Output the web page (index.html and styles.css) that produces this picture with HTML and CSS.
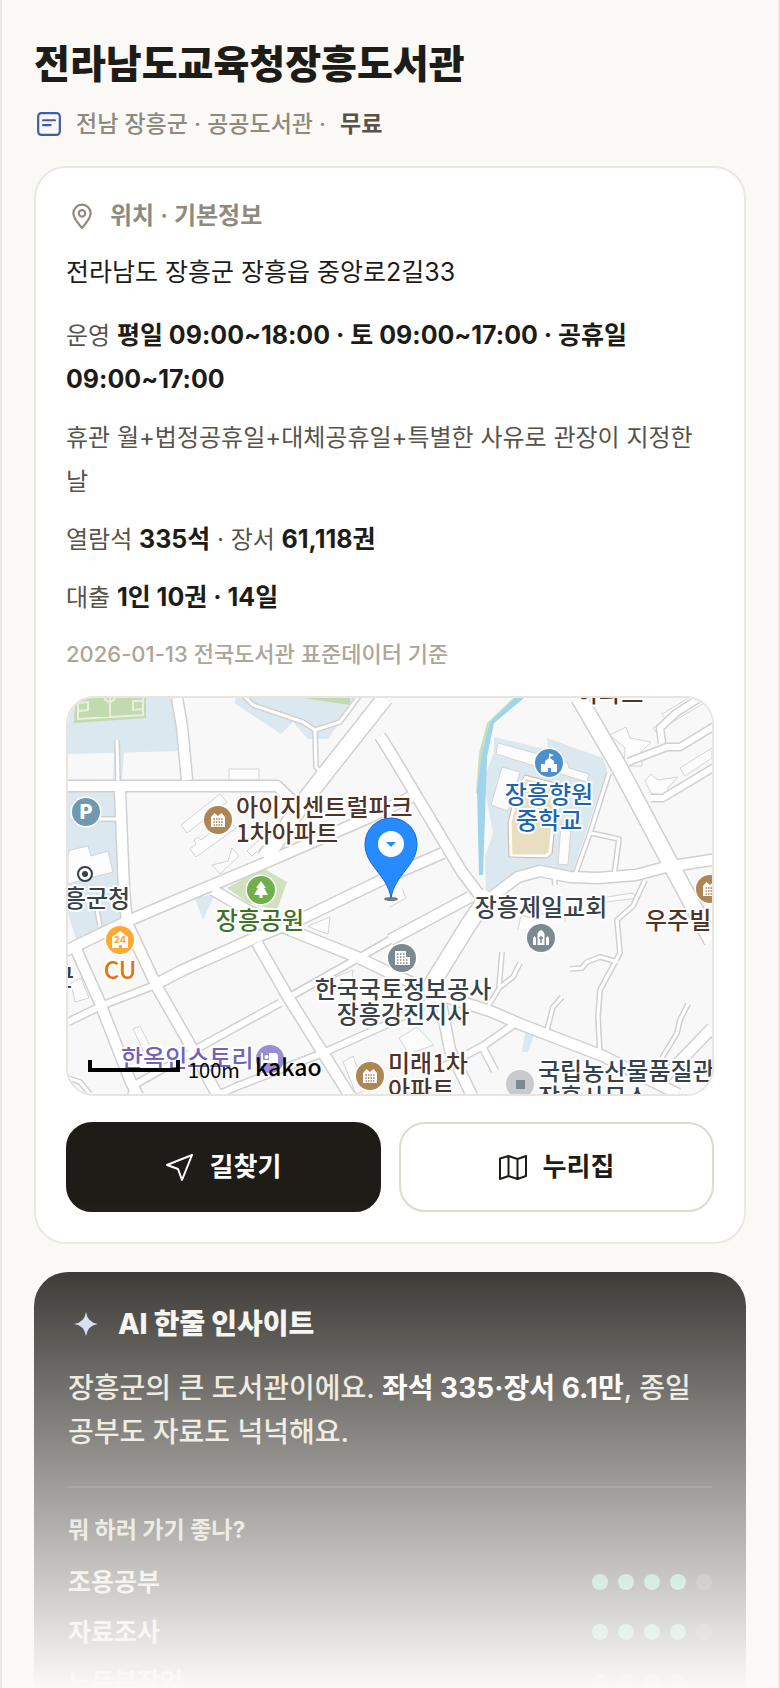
FILE: index.html
```html
<!DOCTYPE html>
<html lang="ko">
<head>
  <meta charset="UTF-8">
  <meta name="viewport" content="width=device-width, initial-scale=1.0">
  <title>전라남도교육청장흥도서관</title>
  <link rel="stylesheet" href="styles.css">
</head>
<body>
  <main class="page">
    <!-- Title -->
    <header class="page-header">
      <h1 class="title">전라남도교육청장흥도서관</h1>
      <p class="subtitle">
        <svg class="subtitle-icon" viewBox="0 0 24 24" aria-hidden="true">
          <rect x="2" y="2" width="20" height="20" rx="3"/>
          <path d="M6.500 8.500h11M6.500 13h7"/>
        </svg>
        <span>전남 장흥군 · 공공도서관 ·</span>
        <b>무료</b>
      </p>
    </header>

    <!-- Location card -->
    <section class="card">
      <h2 class="card-head">
        <svg class="pin-icon" viewBox="0 0 24 24" aria-hidden="true">
          <path d="M12 23C8 18.500 4 14 4 9.500a8 8 0 0 1 16 0C20 14 16 18.500 12 23z"/>
          <circle cx="12" cy="9.500" r="3"/>
        </svg>
        위치 · 기본정보
      </h2>
      <p class="address">전라남도 장흥군 장흥읍 중앙로2길33</p>
      <div class="info">
        <p>운영 <b>평일 09:00~18:00 · 토 09:00~17:00 · 공휴일 09:00~17:00</b></p>
        <p>휴관 월+법정공휴일+대체공휴일+특별한 사유로 관장이 지정한 날</p>
        <p>열람석 <b>335석</b> · 장서 <b>61,118권</b></p>
        <p>대출 <b>1인 10권 · 14일</b></p>
      </div>
      <p class="source">2026-01-13 전국도서관 표준데이터 기준</p>

      <div class="map">
        <svg viewBox="0 0 644 396" preserveAspectRatio="xMidYMid slice" role="img" aria-label="지도">
          <defs>
            <g id="road-l">
              <path d="M317 0 260 72 239 99 197 160"/>
              <path d="M511 0 550 67 602 165 644 243"/>
              <path d="M422 195 399 229 362 289"/>
            </g>
            <g id="road-m">
              <path d="M-5 88H209L230 108"/>
              <path d="M109 0 114 29 119 82"/>
              <path d="M52 93 56 192 59 225 89 289 125 352 151 400"/>
              <path d="M-5 254 62 222 104 204 192 167 300 120 345 98"/>
              <path d="M312 38 324 57 394 174 416 203"/>
              <path d="M92 284 115 272 189 239 235 220 322 178 375 155"/>
              <path d="M145 192 179 212 222 232 289 259 322 275 372 297 422 313 452 326 535 358 582 382 610 396"/>
              <path d="M189 245 220 299 255 355 282 398"/>
              <path d="M7 249 32 305 62 382 70 398"/>
              <path d="M322 242 402 199"/>
              <path d="M372 300 382 352 404 398"/>
              <path d="M418 203 450 179 472 173 502 179 530 180 568 177 598 169 650 161"/>
              <path d="M590 386 644 330"/>
            </g>
            <g id="road-s">
              <path d="M0 324 35 307 85 288"/>
              <path d="M225 297 287 262 322 242"/>
              <path d="M212 305 130 350M125 354 68 386 62 400"/>
              <path d="M152 396 170 388 255 355 322 325 368 300"/>
              <path d="M448 325 415 348 375 369M415 350 427 373"/>
              <path d="M560 64 599 49 612 49 648 27M594 45 592 30 608 15 638 -4"/>
              <path d="M583 100 595 100 648 68"/>
            </g>
            <g id="road-xs">
              <path d="M49 42 50 84M32 121H48"/>
              <path d="M26 196 32 228"/>
              <path d="M175 -3 185 7 235 24 247 32 272 24 292 -3M247 32 248 69 256 77"/>
              <path d="M532 357 530 319 532 292 552 255 549 222 565 208 577 182"/>
              <path d="M550 264 532 259 519 264 514 270 502 271"/>
              <path d="M419 310 432 289 445 279 452 265M431 289 434 254"/>
              <path d="M479 332 485 309 494 299"/>
              <path d="M594 360 609 335 612 322 620 306"/>
              <path d="M541 75 522 135 507 177M523 135 551 141 546 178"/>
              <path d="M486 176 487 187"/>
              <path d="M0 380 12 384 22 396"/>
            </g>
            <g id="apt">
              <circle r="14.500" class="halo"/>
              <circle r="14" fill="#ad8656"/>
              <path d="M-7 7V-3l3.500-4L0-4l3.500-3L7-3V7z" fill="#fff"/>
              <path d="M-4.500-1h9M-4.500 2h9M-4.500 5h9" stroke="#ad8656" stroke-width="1.500" stroke-dasharray="1.500 1"/>
            </g>
          </defs>

          <rect width="644" height="396" fill="#f8f8f8"/>

          <!-- Ground areas -->
          <g fill="#dbe8f0">
            <path d="M0 0H105L112 53 0 56z"/>
            <path d="M46 53H56L54 82H45z"/>
            <path d="M0 94H46L52 222 8 241 0 215z"/>
            <path d="M168 0H288L272 24 260 41H240L225 24 213 36 166 5z"/>
            <path d="M426 39 480 52 479 40 535 60 539 72 505 173 472 168 450 172 422 197H418L417 159 425 135 415 82 426 55z"/>
            <path d="M127 200 147 196 135 222z"/>
            <path d="M457 335 466 337 460 354H454z"/>
            <path d="M418 190H428L422 199z"/>
          </g>
          <path d="M445 0H455L424 26 417 59 412 100 408 95 411 55 419 25z" fill="#cbdfbd"/>
          <path d="M447 0H456L426 25 419 59 415 177H411L409 92 414 55 422 24z" fill="#9ed5ec"/>
          <g fill="#c2dab0">
            <path d="M7-2H78V20L6 25z"/>
            <path d="M235 0H282V7z"/>
            <path d="M159 190 195 170 219 184 209 212 180 205z" fill="#cfe1bf"/>
          </g>
          <path d="M10-2V21L75 17V-2M10 13 20 12V4L10 5M75 11 65 12V3H75M42-2V19M36 0Q42 8 47 0" class="pitch"/>
          <path d="M457 79 489 87 482 155 478 158 443 158 442 125 450 92z" fill="#e9dfc0" stroke="#fff" stroke-width="3"/>
          <path d="M457 77 491 86 484 156 479 160 441 159 440 125 448 92z" class="pitch-edge"/>

          <!-- Buildings -->
          <g class="building">
            <path d="M161 71H191V82H161z"/>
            <path d="M113 127 152 96 159 104 119 135z"/>
            <path d="M122 151 128 146 126 142 130 139 133 142 160 121 168 130 128 159z"/>
            <path d="M144 167 160 163 164 150 171 158 152 176z"/>
            <path d="M0 156 2 152 20 148 23 158 40 153 45 174 0 186z"/>
            <path d="M179 153 200 134 205 139 184 158z"/>
            <path d="M430 45 499 64 501 70 521 76 519 84 428 56z"/>
            <path d="M434 69 452 74 440 113 423 107z"/>
            <path d="M493 126 503 128 500 167 490 166z"/>
            <path d="M542 37 558 29 562 40 583 44 573 54 574 68 556 68 557 50z"/>
            <path d="M577 83 583 76 590 82 610 79 600 90 599 101 583 95z"/>
            <path d="M585 30 598 22 594 16 644-14 644 0 588 34z"/>
            <path d="M612 70 644 50V60L617 78z"/>
            <path d="M533 200 564 195 570 200 538 204z"/>
            <path d="M450 232 453 217 470 222V216H497V224"/>
            <path d="M240 228 262 219 260 236 248 232z"/>
            <path d="M3 285 13 280 21 300 7 304z"/>
            <path d="M65 331 72 328 84 352 77 356z"/>
            <path d="M331 340 349 329 366 347 341 356z"/>
            <path d="M275 364 285 358 298 392 288 396z"/>
            <path d="M250 286 285 272 284 280 254 296z"/>
            <path d="M322 209 338 200 334 190"/>
          </g>

          <!-- Roads: grey casing first, white fill over it -->
          <g class="road road-casing">
            <use href="#road-xs" stroke-width="6"/>
            <use href="#road-s" stroke-width="9"/>
            <use href="#road-m" stroke-width="13"/>
            <use href="#road-l" stroke-width="18"/>
          </g>
          <g class="road road-fill">
            <use href="#road-xs" stroke-width="3"/>
            <use href="#road-s" stroke-width="6"/>
            <use href="#road-m" stroke-width="10"/>
            <use href="#road-l" stroke-width="15"/>
          </g>

          <!-- Place icons -->
          <g transform="translate(18 114)">
            <circle r="14.500" class="halo"/><circle r="14" fill="#7199ad"/>
            <text class="parking" y="7">P</text>
          </g>
          <use href="#apt" x="150" y="122"/>
          <use href="#apt" x="302" y="378"/>
          <use href="#apt" x="642" y="191"/>
          <g transform="translate(193 192)">
            <circle r="14.500" class="halo"/><circle r="14" fill="#71ae4c"/>
            <path d="M0-9 5-2H3L7 5H1.500V8H-1.500V5H-7L-3-2H-5z" fill="#fff"/>
          </g>
          <g transform="translate(481 65)">
            <circle r="14.500" class="halo"/><circle r="14" fill="#4d90cc"/>
            <path d="M-8 9V1h4v-3l4-3V-9.500l5 1.500-4 2v1l4 3v3h3V9H2V5h-3v4z" fill="#fff"/>
          </g>
          <g transform="translate(52 242)">
            <circle r="14.500" class="halo"/><circle r="14" fill="#ffa931"/>
            <path d="M-8 8V-3L0-9 8-3V8H2V5h-3v3z" fill="#fff"/>
            <text class="cu-badge" y="3">24</text>
          </g>
          <g transform="translate(202 361)">
            <circle r="14" fill="#9b8dd5"/>
            <path d="M-9-6v13h2V4H6v3h2V-4L6-6H-1V1h-6v-7z" fill="#fff"/><circle cx="-3.500" cy="-2" r="2" fill="#fff"/>
          </g>
          <g transform="translate(473 240)">
            <circle r="14.500" class="halo"/><circle r="14" fill="#7b8a91"/>
            <path d="M-3.500 7V-4Q-3-7 0-8 3-7 3.500-4V7zM-8 7V0l1.500-2L-5 0v7zM5 7V0l1.500-2L8 0v7z" fill="#fff"/>
            <path d="M0-2V5M-2 0H2" stroke="#7b8a91" stroke-width="1.500"/>
          </g>
          <g transform="translate(334 260)">
            <circle r="14.500" class="halo"/><circle r="14" fill="#7b8a91"/>
            <path d="M-7 7V-7H4V-1H8V7z" fill="#fff"/>
            <path d="M-5-4H3M-5-1H3M-5 2H6M-5 5H6" stroke="#7b8a91" stroke-width="1.500" stroke-dasharray="1.500 1.500"/>
          </g>
          <circle cx="452" cy="386" r="14" fill="#c9cace"/>
          <path d="M448 382h9v9h-9z" fill="#7b8a91"/>
          <circle cx="17" cy="176" r="7" fill="#fff" stroke="#394045" stroke-width="2"/>
          <circle cx="17" cy="176" r="3" fill="#394045"/>

          <!-- Place names -->
          <g class="place brown">
            <text x="168" y="118">아이지센트럴파크</text>
            <text x="168" y="144">1차아파트</text>
            <text x="320" y="374">미래1차</text>
            <text x="320" y="400">아파트</text>
            <text x="577" y="231">우주빌라</text>
            <text x="509" y="4">아파트</text>
          </g>
          <g class="place slate">
            <text x="470" y="382">국립농산물품질관리원</text>
            <text x="470" y="408">장흥사무소</text>
          </g>
          <g class="place slate centered">
            <text x="473" y="218">장흥제일교회</text>
            <text x="335" y="300">한국국토정보공사</text>
            <text x="335" y="325">장흥강진지사</text>
            <text x="18" y="209">장흥군청</text>
            <text x="-5" y="288">군</text>
          </g>
          <g class="place blue centered">
            <text x="481" y="105">장흥향원</text>
            <text x="481" y="131">중학교</text>
          </g>
          <text class="place green centered" x="192" y="231">장흥공원</text>
          <text class="place orange centered" x="52" y="281">CU</text>
          <text class="place violet" x="53" y="369">한옥인스토리</text>

          <!-- Scale bar and map logo -->
          <path d="M22 362V372H110V362" fill="none" stroke="#000" stroke-width="4"/>
          <text class="scale" x="120" y="380">100m</text>
          <text class="logo" x="187" y="378">kakao</text>

          <!-- Marker -->
          <ellipse cx="323" cy="201" rx="7" ry="2" fill="#777"/>
          <path d="M323 200C319 176 297 168 297 146a26 26 0 0 1 52 0C349 168 327 176 323 200z" fill="#258bff" stroke="#1668d0"/>
          <circle cx="323" cy="146" r="13" fill="#fff"/>
          <path d="M318 144H328L323 149z" fill="#258bff"/>
        </svg>
      </div>

      <div class="actions">
        <button class="btn btn-dark" type="button">
          <svg viewBox="0 0 28 28" aria-hidden="true"><path d="M26 2 1 12l11 4 4 11z"/></svg>
          길찾기
        </button>
        <button class="btn btn-light" type="button">
          <svg viewBox="0 0 28 28" aria-hidden="true"><path d="M1 5.500 9.500 3l9 3L27 3v20l-8.500 3-9-3L1 26zM9.500 3v20M18.500 6v20"/></svg>
          누리집
        </button>
      </div>
    </section>

    <!-- AI insight card -->
    <section class="insight">
      <h2 class="insight-head">
        <svg viewBox="0 0 24 24" aria-hidden="true"><path d="M12 0Q13.500 10.500 24 12 13.500 13.500 12 24 10.500 13.500 0 12 10.500 10.500 12 0z"/></svg>
        AI 한줄 인사이트
      </h2>
      <p class="insight-text">장흥군의 큰 도서관이에요. <b>좌석 335·장서 6.1만</b>, 종일 공부도 자료도 넉넉해요.</p>
      <div class="scores">
        <h3>뭐 하러 가기 좋나?</h3>
        <div class="score">
          <span>조용공부</span>
          <span class="dots"><i class="on"></i><i class="on"></i><i class="on"></i><i class="on"></i><i></i></span>
        </div>
        <div class="score">
          <span>자료조사</span>
          <span class="dots"><i class="on"></i><i class="on"></i><i class="on"></i><i class="on"></i><i></i></span>
        </div>
        <div class="score">
          <span>노트북작업</span>
          <span class="dots"><i class="on"></i><i class="on"></i><i class="on"></i><i class="on"></i><i></i></span>
        </div>
      </div>
    </section>

    <div class="fade"></div>
  </main>
</body>
</html>
```

FILE: styles.css
```css
* {
  box-sizing: border-box;
}

body {
  margin: 0;
  background-color: #faf9f5;
  color: #1d1c17;
  font-family: Inter, 'Noto Sans CJK KR', sans-serif;
  word-break: keep-all;
}

h1, h2, h3, p {
  margin: 0;
}

.page {
  position: relative;
  height: 100vh;
  overflow: hidden;
  padding: 38px 32px 0;
  border-left: 2px solid #e9e7e0;
  border-right: 2px solid #e9e7e0;
}

/* Title */
.page-header {
  margin-bottom: 24px;
}

.title {
  font-size: 39px;
  line-height: 52px;
  font-weight: 800;
}

.subtitle {
  display: flex;
  align-items: center;
  gap: 14px;
  margin-top: 16px;
  padding-left: 2px;
  font-size: 23px;
  line-height: 36px;
  font-weight: 500;
  color: #8f8a7e;
}

.subtitle b {
  font-weight: 600;
  color: #57534a;
}

.subtitle-icon {
  width: 26px;
  height: 26px;
  fill: none;
  stroke: #3f5bb0;
  stroke-width: 2;
  stroke-linecap: round;
}

/* Location card */
.card {
  background-color: #fff;
  border: 2px solid #e9e7e0;
  border-radius: 32px;
  padding: 30px;
}

.card-head {
  display: flex;
  align-items: center;
  gap: 14px;
  padding-left: 2px;
  font-size: 24px;
  line-height: 36px;
  font-weight: 600;
  color: #8f8a7e;
}

.pin-icon {
  width: 28px;
  height: 26px;
  fill: none;
  stroke: #8f8a7e;
  stroke-width: 2;
}

.address {
  margin-top: 16px;
  font-size: 25px;
  line-height: 44px;
}

.info {
  display: flex;
  flex-direction: column;
  gap: 14px;
  margin-top: 20px;
  font-size: 24px;
  line-height: 44px;
  color: #57534a;
}

.info b {
  font-size: 25px;
  line-height: 32px;
  font-weight: 700;
  color: #1d1c17;
}

.source {
  margin-top: 16px;
  font-size: 22px;
  line-height: 36px;
  font-weight: 500;
  color: #aca699;
}

/* Map */
.map {
  height: 400px;
  margin-top: 24px;
  border: 2px solid #e9e5de;
  border-radius: 28px;
  overflow: hidden;
}

.map svg {
  display: block;
  width: 100%;
  height: 100%;
}

.road {
  fill: none;
  stroke-linejoin: round;
}

.road-casing {
  stroke: #d0d0d0;
}

.road-fill {
  stroke: #fff;
}

.building {
  fill: #fcfcfc;
  stroke: #d4d4d4;
}

.pitch {
  fill: none;
  stroke: #e6f0dd;
  stroke-width: 2;
}

.pitch-edge {
  fill: none;
  stroke: #d3b7a0;
}

.halo {
  fill: none;
  stroke: #fff;
  stroke-width: 2;
}

.place {
  font-family: 'Noto Sans CJK KR', sans-serif;
  font-size: 24px;
  font-weight: 500;
  stroke: #fff;
  stroke-width: 4px;
  stroke-linejoin: round;
  paint-order: stroke;
}

.centered {
  text-anchor: middle;
}

.brown { fill: #4f3324; }
.slate { fill: #35424a; }
.blue { fill: #1b66b1; }
.green { fill: #3f7226; }
.orange { fill: #e27310; }
.violet { fill: #7462b7; }

.parking,
.cu-badge {
  font-weight: 800;
  text-anchor: middle;
}

.parking {
  font-size: 20px;
  fill: #fff;
}

.cu-badge {
  font-size: 9px;
  fill: #ffa931;
}

.scale {
  font-family: 'Noto Sans CJK KR', sans-serif;
  font-size: 20px;
}

.logo {
  font-family: 'Noto Sans CJK KR', sans-serif;
  font-size: 23px;
  font-weight: 500;
}

/* Buttons */
.actions {
  display: grid;
  grid-template-columns: 1fr 1fr;
  gap: 18px;
  margin-top: 26px;
}

.btn {
  display: flex;
  align-items: center;
  justify-content: center;
  gap: 16px;
  height: 90px;
  border: 2px solid #dddad0;
  border-radius: 26px;
  font-family: inherit;
  font-size: 26px;
  line-height: 32px;
  font-weight: 700;
  cursor: pointer;
}

.btn svg {
  width: 28px;
  height: 28px;
  fill: none;
  stroke: currentColor;
  stroke-width: 2;
  stroke-linejoin: round;
}

.btn-dark {
  background-color: #1d1c17;
  border-color: #1d1c17;
  color: #fff;
}

.btn-light {
  background-color: #fff;
  color: #1d1c17;
}

/* AI insight card */
.insight {
  margin-top: 28px;
  padding: 32px 34px;
  border-radius: 34px;
  background-color: #1d1c17;
  color: #e6e2d6;
}

.insight-head {
  display: flex;
  align-items: center;
  gap: 20px;
  padding-left: 6px;
  font-size: 28px;
  line-height: 40px;
  font-weight: 800;
  color: #f6f4ee;
}

.insight-head svg {
  width: 24px;
  height: 24px;
  fill: #cdd8f6;
}

.insight-text {
  margin-top: 22px;
  font-size: 28px;
  line-height: 44px;
  font-weight: 500;
}

.insight-text b {
  font-weight: 700;
  color: #fff;
}

.scores {
  display: flex;
  flex-direction: column;
  gap: 14px;
  margin-top: 32px;
  padding-top: 26px;
  border-top: 2px solid rgba(255, 255, 255, 0.12);
}

.scores h3 {
  margin-bottom: 4px;
  font-size: 23px;
  line-height: 32px;
  font-weight: 700;
  color: #d3cfc4;
}

.score {
  display: flex;
  align-items: center;
  justify-content: space-between;
  font-size: 25px;
  line-height: 36px;
  font-weight: 600;
}

.dots {
  display: flex;
  gap: 10px;
}

.dots i {
  width: 16px;
  height: 16px;
  border-radius: 50%;
  background-color: rgba(255, 255, 255, 0.15);
}

.dots .on {
  background-color: #5fc09a;
}

/* Fade at the bottom of the screen */
.fade {
  position: absolute;
  left: 0;
  right: 0;
  bottom: 0;
  height: 486px;
  background: linear-gradient(rgba(250, 249, 245, 0), #faf9f5);
  pointer-events: none;
}
```
